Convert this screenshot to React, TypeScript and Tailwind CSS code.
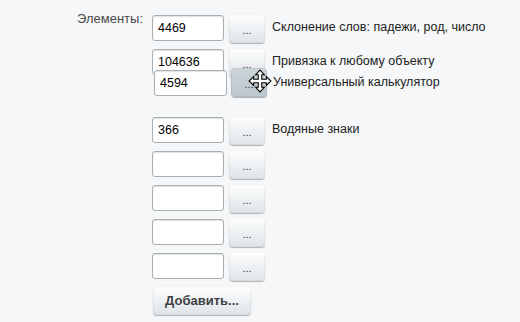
import React from "react";

type Row = {
  id: string;
  value: string;
  title: string;
};

const rows: (Row | null)[] = [
  { id: "r1", value: "4469", title: "Склонение слов: падежи, род, число" },
  { id: "r2", value: "104636", title: "Привязка к любому объекту" },
  null, // slot of the row being dragged
  { id: "r4", value: "366", title: "Водяные знаки" },
  { id: "r5", value: "", title: "" },
  { id: "r6", value: "", title: "" },
  { id: "r7", value: "", title: "" },
  { id: "r8", value: "", title: "" },
];

const inputCls =
  "h-[26px] px-[5px] bg-white border border-[#a7b0b4] rounded-[3px] shadow-[inset_0_1px_1px_rgba(0,0,0,0.12)] text-[12.5px] text-black outline-none";

function DotsButton({ active = false }: { active?: boolean }) {
  return (
    <button
      className={
        active
          ? "ml-[4px] w-[36px] h-[29px] rounded-[4px] bg-gradient-to-b from-[#ccd5da] to-[#bcc7cd] shadow-[0_1px_1px_rgba(0,0,0,0.3),inset_0_0_0_1px_rgba(0,0,0,0.06)] text-[11px] leading-none text-[#333] pt-[3px]"
          : "ml-[5px] w-[36px] h-[29px] rounded-[4px] bg-gradient-to-b from-white to-[#dee4e7] shadow-[0_1px_1px_rgba(0,0,0,0.28),inset_0_0_0_1px_rgba(0,0,0,0.04)] text-[11px] leading-none text-[#333] pt-[3px]"
      }
    >
      ...
    </button>
  );
}

function MoveCursor() {
  return (
    <svg width="24" height="24" viewBox="0 0 22 22" className="absolute left-[94px] top-[1px]">
      <path
        d="M11 1 L15 5.2 H12.6 V9.4 H16.8 V7 L21 11 L16.8 15 V12.6 H12.6 V16.8 H15 L11 21 L7 16.8 H9.4 V12.6 H5.2 V15 L1 11 L5.2 7 V9.4 H9.4 V5.2 H7 Z"
        fill="white"
        stroke="black"
        strokeWidth="1"
        strokeLinejoin="miter"
      />
    </svg>
  );
}

export default function App() {
  return (
    <div
      className="relative w-[520px] h-[322px] bg-[#f5f7f8] overflow-hidden"
      style={{ fontFamily: '"Liberation Sans", Arial, sans-serif' }}
    >
      <div className="flex items-start">
        <div className="w-[143px] mt-[11px] text-right text-[13px] leading-[16px] text-[#4a4a4a]">
          Элементы:
        </div>
        <div className="ml-[9px] mt-[14px] flex flex-col gap-[5px]">
          {rows.map((row, i) =>
            row ? (
              <div key={row.id} className="flex items-start h-[29px]">
                <input className={`${inputCls} w-[72px] mt-px`} defaultValue={row.value} />
                <DotsButton />
                {row.title && (
                  <span className="ml-[7px] text-[12.5px] leading-[27px] text-[#222] whitespace-nowrap">
                    {row.title}
                  </span>
                )}
              </div>
            ) : (
              <div key={`slot-${i}`} className="h-[29px]" />
            )
          )}
          <button className="ml-px w-[98px] h-[29px] rounded-[4px] bg-gradient-to-b from-white to-[#dee4e7] shadow-[0_1px_1px_rgba(0,0,0,0.28),inset_0_0_0_1px_rgba(0,0,0,0.04)] text-[13px] font-bold text-[#3d4245]">
            Добавить...
          </button>
        </div>
      </div>

      {/* row in the middle of a drag */}
      <div className="absolute left-[154px] top-[68px] flex items-start h-[29px]">
        <input className={`${inputCls} w-[73px] mt-[2px]`} defaultValue="4594" />
        <DotsButton active />
        <span className="ml-[6px] text-[12.5px] leading-[28px] text-[#222] whitespace-nowrap">
          Универсальный калькулятор
        </span>
        <MoveCursor />
      </div>
    </div>
  );
}
